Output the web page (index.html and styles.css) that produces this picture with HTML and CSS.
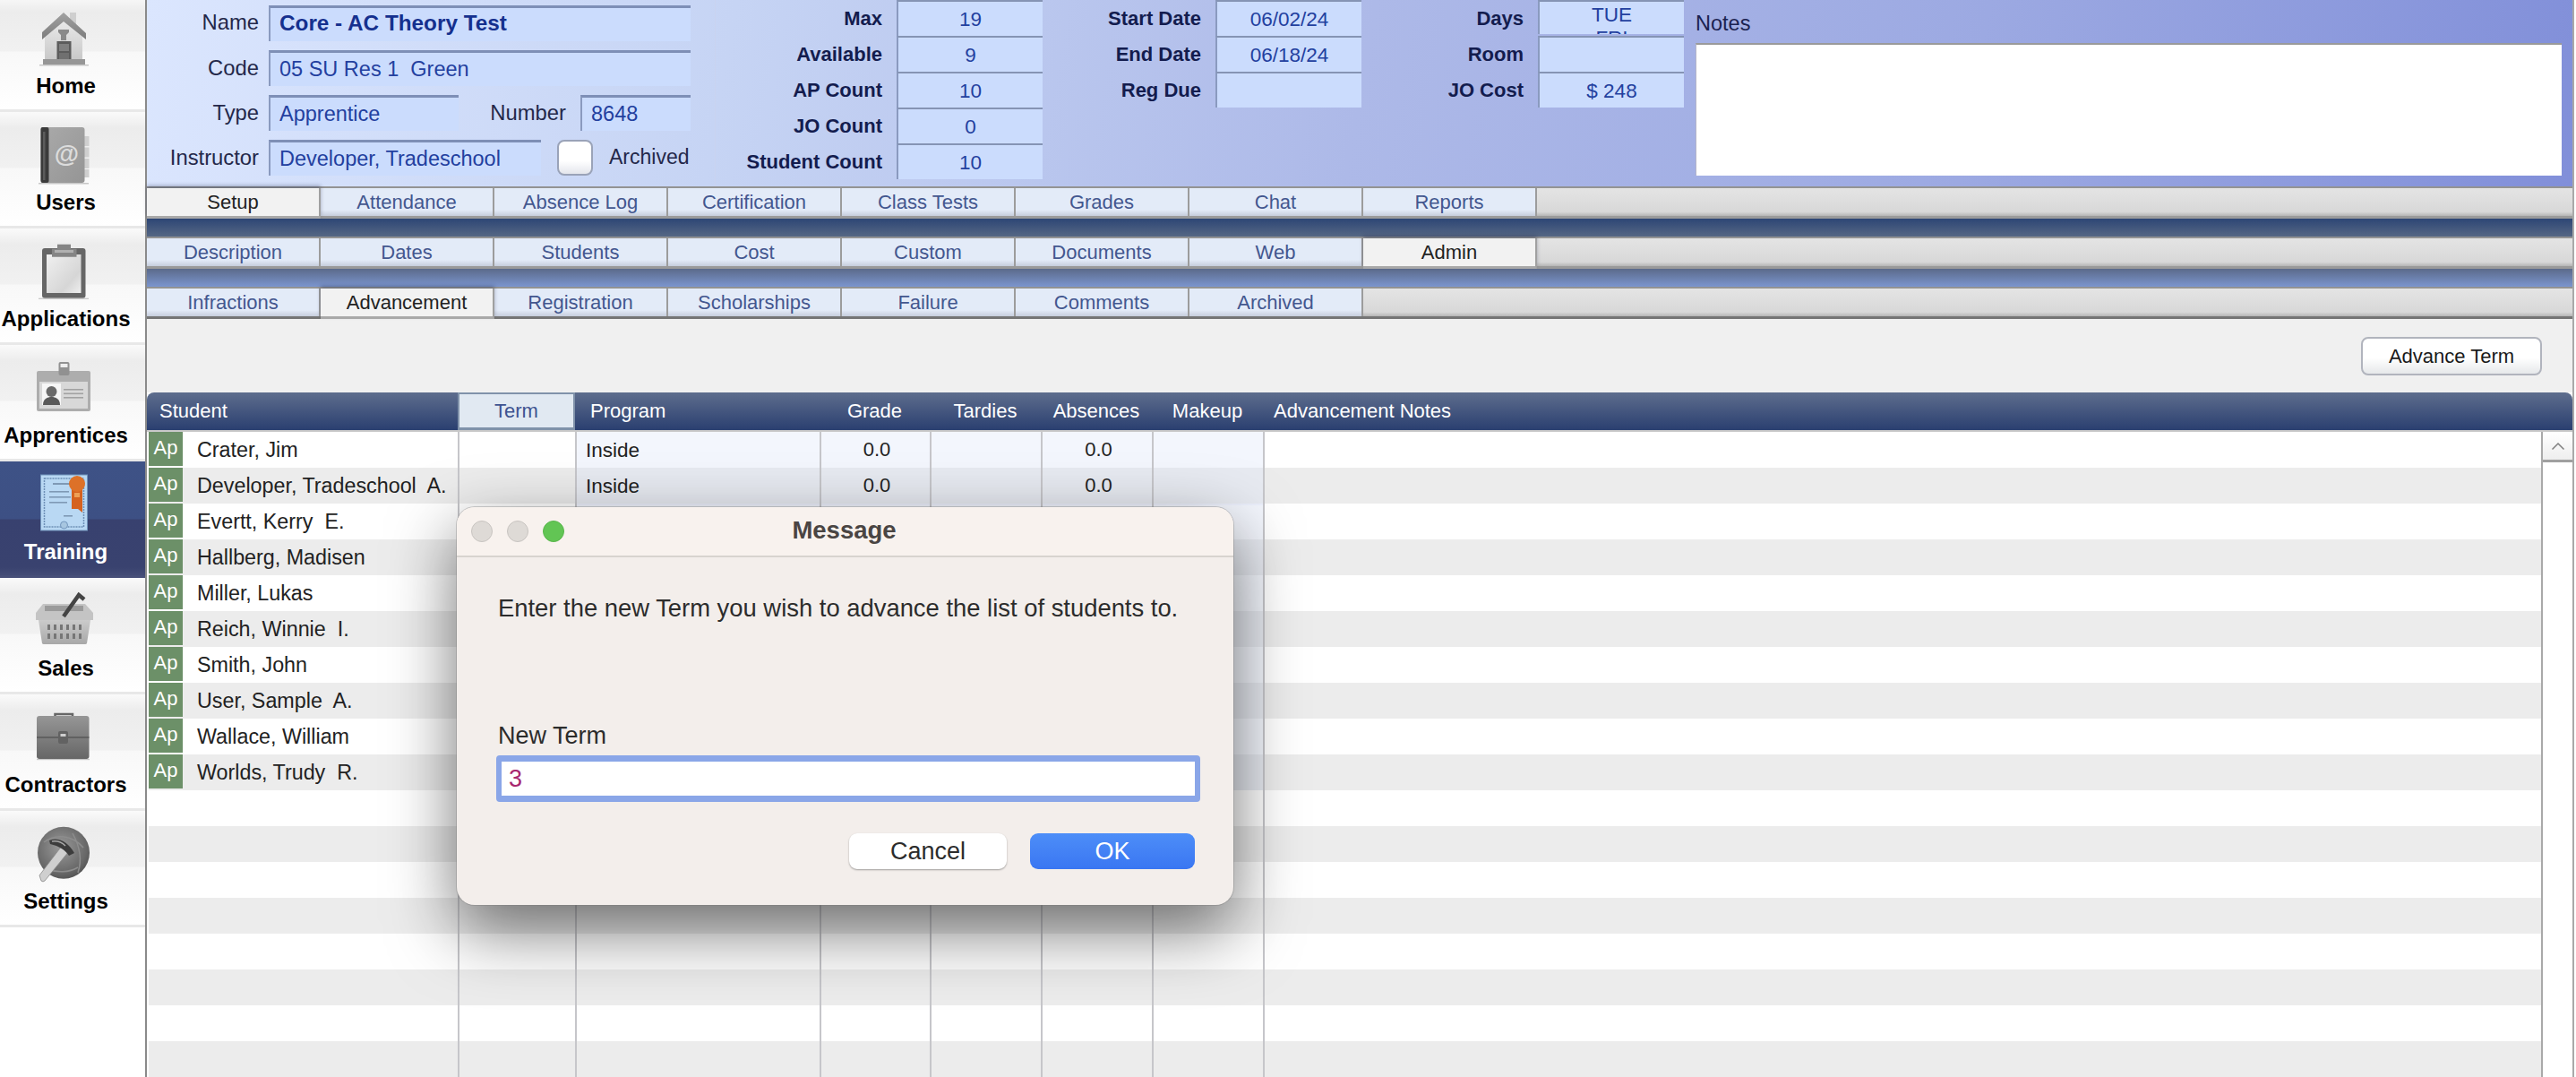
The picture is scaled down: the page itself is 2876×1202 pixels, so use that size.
FILE: index.html
```html
<!DOCTYPE html>
<html lang="en">
<head>
<meta charset="utf-8">
<title>Training</title>
<link rel="stylesheet" href="styles.css">
</head>
<body>
<div class="app">
  <nav class="sidebar">
    <svg width="0" height="0" class="defs"><defs>
      <linearGradient id="gWall" x1="0" y1="0" x2="0" y2="1"><stop offset="0" stop-color="#ececec"/><stop offset="1" stop-color="#c8c8c8"/></linearGradient>
      <linearGradient id="gRoof" x1="0" y1="0" x2="0" y2="1"><stop offset="0" stop-color="#a2a2a2"/><stop offset="1" stop-color="#7c7c7c"/></linearGradient>
      <linearGradient id="gBook" x1="0" y1="0" x2="1" y2="1"><stop offset="0" stop-color="#aaa"/><stop offset="1" stop-color="#959595"/></linearGradient>
      <linearGradient id="gPaper" x1="0" y1="0" x2="1" y2="1"><stop offset="0" stop-color="#f0f0f0"/><stop offset=".7" stop-color="#d6d6d6"/><stop offset="1" stop-color="#efefef"/></linearGradient>
      <linearGradient id="gCase" x1="0" y1="0" x2="0" y2="1"><stop offset="0" stop-color="#969696"/><stop offset="1" stop-color="#666"/></linearGradient>
      <linearGradient id="gBasket" x1="0" y1="0" x2="0" y2="1"><stop offset="0" stop-color="#cbcbcb"/><stop offset="1" stop-color="#a8a8a8"/></linearGradient>
      <radialGradient id="gGlobe" cx=".45" cy=".4" r=".7"><stop offset="0" stop-color="#9a9a9a"/><stop offset=".7" stop-color="#686868"/><stop offset="1" stop-color="#484848"/></radialGradient>
    </defs></svg>

    <a class="nav-item">
      <svg class="nav-icon" viewBox="0 -2 66 66">
        <rect x="37" y="2" width="7" height="16" fill="#cfcfcf"/>
        <path d="M9 55V24L30 8l21 16v31z" fill="url(#gWall)"/>
        <path d="M6 32V24L30 2l25 23v7L30 12z" fill="url(#gRoof)"/>
        <path d="M24 21h12v3l-3 3v6h-6v-6l-3-3z" fill="#8a8a8a"/>
        <rect x="22.500" y="34" width="16" height="25" fill="#5c5c5c"/>
        <rect x="25" y="37" width="11" height="8" fill="#808080"/>
        <rect x="25" y="47" width="11" height="10" fill="#707070"/>
        <rect x="7" y="54" width="47" height="6" fill="#969696"/>
        <rect x="3" y="60" width="55" height="1.500" fill="#c6c6c6"/>
      </svg>
      <span class="nav-label">Home</span>
    </a>
    <a class="nav-item">
      <svg class="nav-icon" viewBox="0 -2 66 66">
        <g fill="#cfcfcf"><rect x="53" y="10" width="5.500" height="11"/><rect x="53" y="22.500" width="5.500" height="11"/><rect x="53" y="35" width="5.500" height="11"/><rect x="53" y="47" width="5.500" height="9"/></g>
        <rect x="4.500" y="0" width="49" height="62" rx="3" fill="url(#gBook)"/>
        <rect x="4.500" y="0" width="9" height="62" rx="2" fill="#3a3a3a"/>
        <rect x="7" y="5" width="2.500" height="54" fill="#5c5c5c"/>
        <text class="book-at" x="33.500" y="39">@</text>
        <rect x="2" y="62" width="56" height="1.500" fill="#c6c6c6"/>
      </svg>
      <span class="nav-label">Users</span>
    </a>
    <a class="nav-item">
      <svg class="nav-icon" viewBox="0 -2 66 66">
        <rect x="6" y="5" width="48.500" height="55.700" rx="3" fill="#666"/>
        <rect x="11" y="12" width="38.500" height="43" fill="url(#gPaper)"/>
        <path d="M23 .7h15v5h6.500v9H17v-9h6z" fill="#858585"/>
        <rect x="20" y="7" width="21" height="3" fill="#b0b0b0"/>
        <rect x="2" y="60.700" width="56" height="1.300" fill="#c8c8c8"/>
      </svg>
      <span class="nav-label">Applications</span>
    </a>
    <a class="nav-item">
      <svg class="nav-icon" viewBox="0 -2 66 66">
        <rect x="0" y="12" width="60" height="45" rx="2" fill="#adadad"/>
        <rect x="3" y="24" width="54" height="30" fill="#d8d8d8"/>
        <rect x="24.500" y="2" width="12" height="15" rx="2" fill="#919191"/>
        <rect x="26.500" y="4" width="8" height="4" fill="#eee"/>
        <rect x="6" y="26" width="21" height="24" fill="#f6f6f6"/>
        <circle cx="16.500" cy="35" r="6" fill="#6a6a6a"/>
        <path d="M7 50c0-7 5-9 9.500-9s9.500 2 9.500 9z" fill="#5a5a5a"/>
        <g fill="#a2a2a2"><rect x="30" y="32" width="22" height="1.600"/><rect x="30" y="36.500" width="22" height="1.600"/><rect x="30" y="41" width="22" height="1.600"/></g>
      </svg>
      <span class="nav-label">Apprentices</span>
    </a>
    <a class="nav-item nav-item-active">
      <svg class="nav-icon" viewBox="0 -2 66 66">
        <rect x="4.500" y="-2" width="52" height="62" fill="#b9d8f3" stroke="#7396bd" stroke-width="1"/>
        <rect x="8.500" y="2" width="44" height="54" fill="none" stroke="#6e8fb6" stroke-width="1.500" stroke-dasharray="2 1"/>
        <g fill="#7f99b5"><rect x="18" y="7" width="20" height="2"/><rect x="14" y="16" width="22" height="1.600"/><rect x="14" y="22" width="24" height="1.600"/><rect x="14" y="28" width="20" height="1.600"/><rect x="30" y="43" width="10" height="1.600"/></g>
        <circle cx="30.500" cy="54" r="4" fill="#a7c6e0" stroke="#7396bd"/>
        <path d="M39 14h12v26l-5-4-7 0z" fill="#d5621f"/>
        <circle cx="45" cy="8" r="9" fill="#dd7128"/>
        <rect x="42" y="18" width="6" height="5" fill="#eea055"/>
      </svg>
      <span class="nav-label">Training</span>
    </a>
    <a class="nav-item">
      <svg class="nav-icon" viewBox="0 0 66 64">
        <path d="M-1 23l8-10h47l9 10v8H-1z" fill="#c4c4c4"/>
        <rect x="9" y="15" width="43" height="6" fill="#9a9a9a"/>
        <path d="M2 31h58l-4 26a2 2 0 0 1-2 1H8a2 2 0 0 1-2-1z" fill="url(#gBasket)"/>
        <g fill="#767676"><rect x="12" y="36" width="3" height="6"/><rect x="19" y="36" width="3" height="6"/><rect x="26" y="36" width="3" height="6"/><rect x="33" y="36" width="3" height="6"/><rect x="40" y="36" width="3" height="6"/><rect x="47" y="36" width="3" height="6"/><rect x="12" y="46" width="3" height="6"/><rect x="19" y="46" width="3" height="6"/><rect x="26" y="46" width="3" height="6"/><rect x="33" y="46" width="3" height="6"/><rect x="40" y="46" width="3" height="6"/><rect x="47" y="46" width="3" height="6"/></g>
        <path d="M30 27L47 3l6 5" fill="none" stroke="#444" stroke-width="4.500"/>
      </svg>
      <span class="nav-label">Sales</span>
    </a>
    <a class="nav-item">
      <svg class="nav-icon" viewBox="0 -2 66 66">
        <path d="M20.500 10V5h19.500v5" fill="none" stroke="#666" stroke-width="2.500"/>
        <rect x="0" y="7" width="58.500" height="48" rx="3" fill="url(#gCase)"/>
        <path d="M0 31h58.500" stroke="#585858" stroke-width="1.500"/>
        <rect x="24" y="24" width="11" height="14" rx="2" fill="#626262"/>
        <rect x="26.500" y="27" width="6" height="3" fill="#cfcfcf"/>
        <rect x="0" y="55" width="59" height="1.200" fill="#c6c6c6"/>
      </svg>
      <span class="nav-label">Contractors</span>
    </a>
    <a class="nav-item">
      <svg class="nav-icon" viewBox="0 -2 66 66">
        <circle cx="30" cy="29.700" r="29" fill="url(#gGlobe)"/>
        <path d="M8 18c14-10 32-8 44 6M46 52C50 40 50 26 40 8M12 48c10 4 24 4 34-2" fill="none" stroke="#8d8d8d" stroke-width="1.500"/>
        <path d="M3 55l25-33 8 6-27 33a3 3 0 0 1-4 0z" fill="#cfcfcf" stroke="#8a8a8a" stroke-width=".8"/>
        <path d="M14 16c11-4 21 2 28 14l-6 3c-4-6-11-11-21-13z" fill="#3c3c3c"/>
        <path d="M17 17c6-1 11 1 15 5" fill="none" stroke="#a8a8a8" stroke-width="1.500"/>
      </svg>
      <span class="nav-label">Settings</span>
    </a>
  </nav>

  <main class="main">
    <header class="head">
      <div class="ident">
        <div class="id-row"><span class="id-label id-label-first">Name</span><span class="field field-strong field-grow">Core - AC Theory Test</span></div>
        <div class="id-row"><span class="id-label">Code</span><span class="field field-grow">05 SU Res 1  Green</span></div>
        <div class="id-row"><span class="id-label">Type</span><span class="field field-type">Apprentice</span><span class="id-label id-label-number">Number</span><span class="field field-grow">8648</span></div>
        <div class="id-row"><span class="id-label">Instructor</span><span class="field field-instructor">Developer, Tradeschool</span><span class="check"></span><span class="check-label">Archived</span></div>
      </div>
      <div class="stat-col stat-col-a">
        <div class="stat"><span class="stat-label">Max</span><span class="stat-val">19</span></div>
        <div class="stat"><span class="stat-label">Available</span><span class="stat-val">9</span></div>
        <div class="stat"><span class="stat-label">AP Count</span><span class="stat-val">10</span></div>
        <div class="stat"><span class="stat-label">JO Count</span><span class="stat-val">0</span></div>
        <div class="stat"><span class="stat-label">Student Count</span><span class="stat-val">10</span></div>
      </div>
      <div class="stat-col stat-col-b">
        <div class="stat"><span class="stat-label">Start Date</span><span class="stat-val">06/02/24</span></div>
        <div class="stat"><span class="stat-label">End Date</span><span class="stat-val">06/18/24</span></div>
        <div class="stat"><span class="stat-label">Reg Due</span><span class="stat-val"></span></div>
      </div>
      <div class="stat-col stat-col-c">
        <div class="stat"><span class="stat-label">Days</span><span class="stat-val stat-multi">TUE<br>FRI</span></div>
        <div class="stat"><span class="stat-label">Room</span><span class="stat-val"></span></div>
        <div class="stat"><span class="stat-label">JO Cost</span><span class="stat-val">$ 248</span></div>
      </div>
      <div class="notes">
        <div class="notes-label">Notes</div>
        <div class="notes-box"></div>
      </div>
    </header>

    <div class="tabs">
      <span class="tab tab-on">Setup</span><span class="tab">Attendance</span><span class="tab">Absence Log</span><span class="tab">Certification</span><span class="tab">Class Tests</span><span class="tab">Grades</span><span class="tab">Chat</span><span class="tab">Reports</span>
    </div>
    <div class="band band-dark"></div>
    <div class="tabs">
      <span class="tab">Description</span><span class="tab">Dates</span><span class="tab">Students</span><span class="tab">Cost</span><span class="tab">Custom</span><span class="tab">Documents</span><span class="tab">Web</span><span class="tab tab-on">Admin</span>
    </div>
    <div class="band band-light"></div>
    <div class="tabs tabs-last">
      <span class="tab">Infractions</span><span class="tab tab-on">Advancement</span><span class="tab">Registration</span><span class="tab">Scholarships</span><span class="tab">Failure</span><span class="tab">Comments</span><span class="tab">Archived</span>
    </div>

    <div class="toolbar"><button class="advance">Advance Term</button></div>

    <div class="thead">
      <span class="th th-left th-student">Student</span>
      <span class="th th-term">Term</span>
      <span class="th th-left th-program">Program</span>
      <span class="th">Grade</span>
      <span class="th">Tardies</span>
      <span class="th">Absences</span>
      <span class="th">Makeup</span>
      <span class="th th-left th-notes">Advancement Notes</span>
    </div>

    <div class="tbody">
      <div class="rows">
        <div class="row row-data"><span class="cell-student"><span class="ap">Ap</span><span class="name">Crater, Jim</span></span><span class="c"></span><span class="c c-t c-prog">Inside</span><span class="c c-t c-num">0.0</span><span class="c c-t"></span><span class="c c-t c-num">0.0</span><span class="c c-t"></span><span class="c"></span></div>
        <div class="row row-data"><span class="cell-student"><span class="ap">Ap</span><span class="name">Developer, Tradeschool  A.</span></span><span class="c"></span><span class="c c-t c-prog">Inside</span><span class="c c-t c-num">0.0</span><span class="c c-t"></span><span class="c c-t c-num">0.0</span><span class="c c-t"></span><span class="c"></span></div>
        <div class="row row-data"><span class="cell-student"><span class="ap">Ap</span><span class="name">Evertt, Kerry  E.</span></span><span class="c"></span><span class="c c-t"></span><span class="c c-t"></span><span class="c c-t"></span><span class="c c-t"></span><span class="c c-t"></span><span class="c"></span></div>
        <div class="row row-data"><span class="cell-student"><span class="ap">Ap</span><span class="name">Hallberg, Madisen</span></span><span class="c"></span><span class="c c-t"></span><span class="c c-t"></span><span class="c c-t"></span><span class="c c-t"></span><span class="c c-t"></span><span class="c"></span></div>
        <div class="row row-data"><span class="cell-student"><span class="ap">Ap</span><span class="name">Miller, Lukas</span></span><span class="c"></span><span class="c c-t"></span><span class="c c-t"></span><span class="c c-t"></span><span class="c c-t"></span><span class="c c-t"></span><span class="c"></span></div>
        <div class="row row-data"><span class="cell-student"><span class="ap">Ap</span><span class="name">Reich, Winnie  I.</span></span><span class="c"></span><span class="c c-t"></span><span class="c c-t"></span><span class="c c-t"></span><span class="c c-t"></span><span class="c c-t"></span><span class="c"></span></div>
        <div class="row row-data"><span class="cell-student"><span class="ap">Ap</span><span class="name">Smith, John</span></span><span class="c"></span><span class="c c-t"></span><span class="c c-t"></span><span class="c c-t"></span><span class="c c-t"></span><span class="c c-t"></span><span class="c"></span></div>
        <div class="row row-data"><span class="cell-student"><span class="ap">Ap</span><span class="name">User, Sample  A.</span></span><span class="c"></span><span class="c c-t"></span><span class="c c-t"></span><span class="c c-t"></span><span class="c c-t"></span><span class="c c-t"></span><span class="c"></span></div>
        <div class="row row-data"><span class="cell-student"><span class="ap">Ap</span><span class="name">Wallace, William</span></span><span class="c"></span><span class="c c-t"></span><span class="c c-t"></span><span class="c c-t"></span><span class="c c-t"></span><span class="c c-t"></span><span class="c"></span></div>
        <div class="row row-data"><span class="cell-student"><span class="ap">Ap</span><span class="name">Worlds, Trudy  R.</span></span><span class="c"></span><span class="c c-t"></span><span class="c c-t"></span><span class="c c-t"></span><span class="c c-t"></span><span class="c c-t"></span><span class="c"></span></div>
        <div class="row"><span class="cell-student"></span><span class="c"></span><span class="c"></span><span class="c"></span><span class="c"></span><span class="c"></span><span class="c"></span><span class="c"></span></div>
        <div class="row"><span class="cell-student"></span><span class="c"></span><span class="c"></span><span class="c"></span><span class="c"></span><span class="c"></span><span class="c"></span><span class="c"></span></div>
        <div class="row"><span class="cell-student"></span><span class="c"></span><span class="c"></span><span class="c"></span><span class="c"></span><span class="c"></span><span class="c"></span><span class="c"></span></div>
        <div class="row"><span class="cell-student"></span><span class="c"></span><span class="c"></span><span class="c"></span><span class="c"></span><span class="c"></span><span class="c"></span><span class="c"></span></div>
        <div class="row"><span class="cell-student"></span><span class="c"></span><span class="c"></span><span class="c"></span><span class="c"></span><span class="c"></span><span class="c"></span><span class="c"></span></div>
        <div class="row"><span class="cell-student"></span><span class="c"></span><span class="c"></span><span class="c"></span><span class="c"></span><span class="c"></span><span class="c"></span><span class="c"></span></div>
        <div class="row"><span class="cell-student"></span><span class="c"></span><span class="c"></span><span class="c"></span><span class="c"></span><span class="c"></span><span class="c"></span><span class="c"></span></div>
        <div class="row"><span class="cell-student"></span><span class="c"></span><span class="c"></span><span class="c"></span><span class="c"></span><span class="c"></span><span class="c"></span><span class="c"></span></div>
      </div>
      <div class="scrollbar">
        <div class="scroll-up"><svg width="16" height="10" viewBox="0 0 16 10"><path d="M1.500 8.500L8 2l6.500 6.500" fill="none" stroke="#808080" stroke-width="1.500"/></svg></div>
      </div>
    </div>
  </main>
</div>

<section class="dialog">
  <div class="dlg-title">
    <span class="light"></span><span class="light"></span><span class="light light-green"></span>
    <span class="dlg-name">Message</span>
  </div>
  <div class="dlg-body">
    <p class="dlg-msg">Enter the new Term you wish to advance the list of students to.</p>
    <label class="dlg-label">New Term</label>
    <div class="dlg-input">3</div>
    <div class="dlg-actions">
      <button class="btn btn-cancel">Cancel</button>
      <button class="btn btn-ok">OK</button>
    </div>
  </div>
</section>
</body>
</html>
```
FILE: styles.css
```css
* { box-sizing: border-box; }
html, body { margin: 0; padding: 0; height: 1202px; overflow: hidden; background: #fff; }
body { font-family: "Liberation Sans", Arial, Helvetica, sans-serif; position: relative; width: 2876px; }
.defs { position: absolute; }

.app { display: flex; width: 2876px; height: 1202px; }

/* sidebar */
.sidebar { width: 162px; flex: none; margin-top: -5px; display: flex; flex-direction: column; }
.nav-item {
  height: 130px; flex: none; display: flex; flex-direction: column; align-items: center;
  padding: 15px 15px 0 0; border-bottom: 3px solid #e8e8e8;
  background: linear-gradient(#fafafa 0, #ececec 18px, #f1f1f1 62px, #f8f8f8 63px, #fff 127px);
  color: #000;
}
.nav-icon { width: 66px; height: 66px; display: block; overflow: visible; }
.book-at { font: 700 28px "Liberation Sans", sans-serif; fill: #dcdcdc; text-anchor: middle; }
.nav-label { font-size: 24px; font-weight: 700; line-height: 30px; margin-top: 5px; white-space: nowrap; }
.nav-item-active {
  background: linear-gradient(#3e5286 0, #3d5084 64px, #38416f 65px, #39426f 118px, #474f78 130px);
  border-bottom-color: #474f78; color: #fff;
}

/* main */
.main { width: 2712px; flex: none; border-left: 2px solid #8a8a8a; border-right: 2px solid #a9a9a9; display: flex; flex-direction: column; }
.head {
  height: 208px; flex: none; display: flex;
  background: linear-gradient(100deg, #dbe6fe 0%, #c6d4f4 24%, #adb9e8 50%, #9ca9e2 75%, #818fd9 100%);
}
.ident { width: 635px; flex: none; padding: 6px 0 0 0; display: flex; flex-direction: column; gap: 10px; border-right: 1px solid #c9d3f0; }
.id-row { display: flex; height: 40px; align-items: stretch; font-size: 23.500px; padding-right: 27px; }
.id-label { width: 125px; flex: none; text-align: right; line-height: 39px; color: #24284a; margin-right: 11px; font-size: 23.800px; }
.id-label-first { line-height: 37px; }
.id-label-number { width: 110px; margin-right: 16px; margin-left: 10px; }
.field { background: #cbdcfd; border-top: 3px solid #7e8fb6; border-left: 2px solid #8a9abf; color: #23409f; line-height: 36px; padding-left: 10px; white-space: pre; }
.field-grow { flex: 1; }
.field-strong { font-weight: 700; font-size: 24.300px; color: #15308e; line-height: 34px; }
.field-type { width: 212px; flex: none; }
.field-instructor { width: 304px; flex: none; }
.check { width: 40px; height: 40px; flex: none; margin-left: 18px; border: 2px solid #9aa3b8; border-radius: 8px; background: linear-gradient(#fff 60%, #e4e6ec); }
.check-label { margin-left: 18px; line-height: 39px; color: #24284a; font-size: 23px; }

.stat-col { flex: none; display: flex; flex-direction: column; }
.stat-col-a { width: 365px; }
.stat-col-b { width: 356px; }
.stat-col-c { width: 360px; }
.stat { display: flex; height: 40px; gap: 16px; }
.stat-label { flex: 1; text-align: right; font-size: 22px; font-weight: 700; line-height: 41px; color: #131c4e; white-space: nowrap; }
.stat-val {
  width: 163px; flex: none; background: #cbdcfd; border-top: 2px solid #8594b4; border-left: 2px solid #8a9abf;
  color: #23409f; font-size: 22.500px; line-height: 40px; text-align: center; overflow: hidden; height: 40px;
}
.stat-multi { line-height: 26px; padding-top: 2px; height: 38px; margin-bottom: 2px; }
.notes { margin-left: 13px; width: 967px; flex: none; }
.notes-label { height: 48px; font-size: 23.500px; line-height: 52px; color: #1b2250; }
.notes-box { height: 148px; background: #fff; border-top: 2px solid #9a9a9a; border-left: 1px solid #b5b5c8; }

/* tabs */
.tabs { height: 36px; flex: none; display: flex; border-top: 2px solid #939393; border-bottom: 3px solid #9a9a9a; background: linear-gradient(#e4e4e4, #d8d8d8 85%, #b5b5b5); }
.tabs-last { border-bottom-color: #757575; }
.tab {
  width: 194px; flex: none; text-align: center; font-size: 22px; line-height: 31px; color: #43578f;
  background: linear-gradient(#e3ebf8 0, #e3ebf8 78%, #c6cddc 100%); border-right: 2px solid #9c9c9c;
}
.tab-on { background: #f2f2f2; color: #222; box-shadow: 0 -3px 4px rgba(40,50,80,.35); position: relative; margin-bottom: -3px; border-right-color: #a0a0a0; border-bottom: 3px solid #a9a9a9; }
.band { height: 20px; flex: none; }
.band-dark { background: linear-gradient(#2d4675, #566784); }
.band-light { background: linear-gradient(#5b6a8a, #7b95ce); }

/* toolbar */
.toolbar { height: 82px; flex: none; background: #f0f0f0; display: flex; justify-content: flex-end; padding: 20px 34px 0 0; }
.advance {
  width: 202px; height: 43px; border: 2px solid #b1b4bd; border-radius: 8px; font: 22px "Liberation Sans", sans-serif; color: #1a1a1a;
  background: linear-gradient(#fff 55%, #e6e8ea); padding: 0;
}

/* table */
.thead {
  height: 44px; flex: none; display: grid; grid-template-columns: 347px 131px 273px 123px 124px 124px 124px 1fr;
  background: linear-gradient(#5e6d8d, #2a3f70); border-radius: 8px 8px 0 0; border-bottom: 2px solid #c9c9c9; align-items: stretch;
}
.th { color: #fff; font-size: 22px; line-height: 41px; text-align: center; white-space: nowrap; }
.th-left { text-align: left; }
.th-student { padding-left: 14px; }
.th-program { padding-left: 17px; }
.th-notes { padding-left: 12px; }
.th-term { background: #e1e9f2; color: #3e5390; border: 2px solid #8092aa; border-bottom-width: 3px; line-height: 37px; }

.tbody { flex: 1; display: flex; min-height: 0; background: #fff; }
.rows { flex: 1; padding-left: 2px; display: flex; flex-direction: column; }
.row { height: 40px; flex: none; display: grid; grid-template-columns: 345px 131px 273px 123px 124px 124px 124px 1fr; }
.row:nth-child(even) { background: #ececec; }
.cell-student { display: flex; align-items: stretch; }
.ap { width: 38px; height: 38px; flex: none; background: #6c9068; color: #fff; font-size: 22px; line-height: 36px; text-align: center; }
.name { margin-left: 16px; font-size: 23.300px; line-height: 40px; color: #222; white-space: pre; }
.c { border-left: 2px solid #c6c6ca; font-size: 22.500px; color: #222; }
.c-t { background: rgba(226,232,250,.4); }
.c-prog { padding-left: 10px; line-height: 42px; }
.c-num { text-align: center; line-height: 39px; padding-left: 3px; font-size: 22px; }

.scrollbar { width: 35px; flex: none; border-left: 2px solid #a9a9a9; background: #fff; }
.scroll-up { height: 34px; border-bottom: 3px solid #a0a0a0; background: linear-gradient(#fff, #eee); display: flex; align-items: center; justify-content: center; }

/* dialog */
.dialog {
  position: absolute; left: 510px; top: 566px; width: 867px; height: 444px;
  border-radius: 20px; background: #f3eeeb; overflow: hidden;
  box-shadow: 0 0 0 1px rgba(120,120,120,.35), 0 28px 75px rgba(0,0,0,.55);
}
.dlg-title { height: 56px; background: #f8f2ee; border-bottom: 2px solid #d8d3cf; display: flex; align-items: center; padding-left: 16px; gap: 16px; position: relative; }
.light { width: 24px; height: 24px; border-radius: 50%; background: #dedad6; border: 1px solid #c8c4c0; }
.light-green { background: #62c554; border-color: #58b54b; }
.dlg-name { position: absolute; left: 0; right: 0; top: 9px; line-height: 34px; text-align: center; font-size: 27.500px; font-weight: 700; color: #4a4543; padding-right: 2px; }
.dlg-body { padding: 40px 37px 0 46px; display: flex; flex-direction: column; }
.dlg-msg { margin: 0; font-size: 27.400px; line-height: 34px; color: #2c2c2c; white-space: nowrap; }
.dlg-label { margin-top: 108px; font-size: 27px; line-height: 35px; color: #2c2c2c; }
.dlg-input {
  margin: 4px 0 0 -2px; width: 786px; height: 52px; border: 3px solid #8aa6e8; border-width: 7px 6px; border-radius: 4px;
  background: #fff; color: #a8276f; font-size: 27px; line-height: 38px; padding-left: 8px;
}
.dlg-actions { display: flex; justify-content: flex-end; gap: 26px; margin-top: 35px; margin-right: 6px; }
.btn { height: 40px; border: 0; border-radius: 9px; font: 27px "Liberation Sans", sans-serif; padding: 0; }
.btn-cancel { width: 176px; background: #fff; color: #2c2c2c; box-shadow: 0 1px 2px rgba(0,0,0,.35); }
.btn-ok { width: 184px; background: linear-gradient(#4d8ef8, #3a76f2); color: #fff; }
```
